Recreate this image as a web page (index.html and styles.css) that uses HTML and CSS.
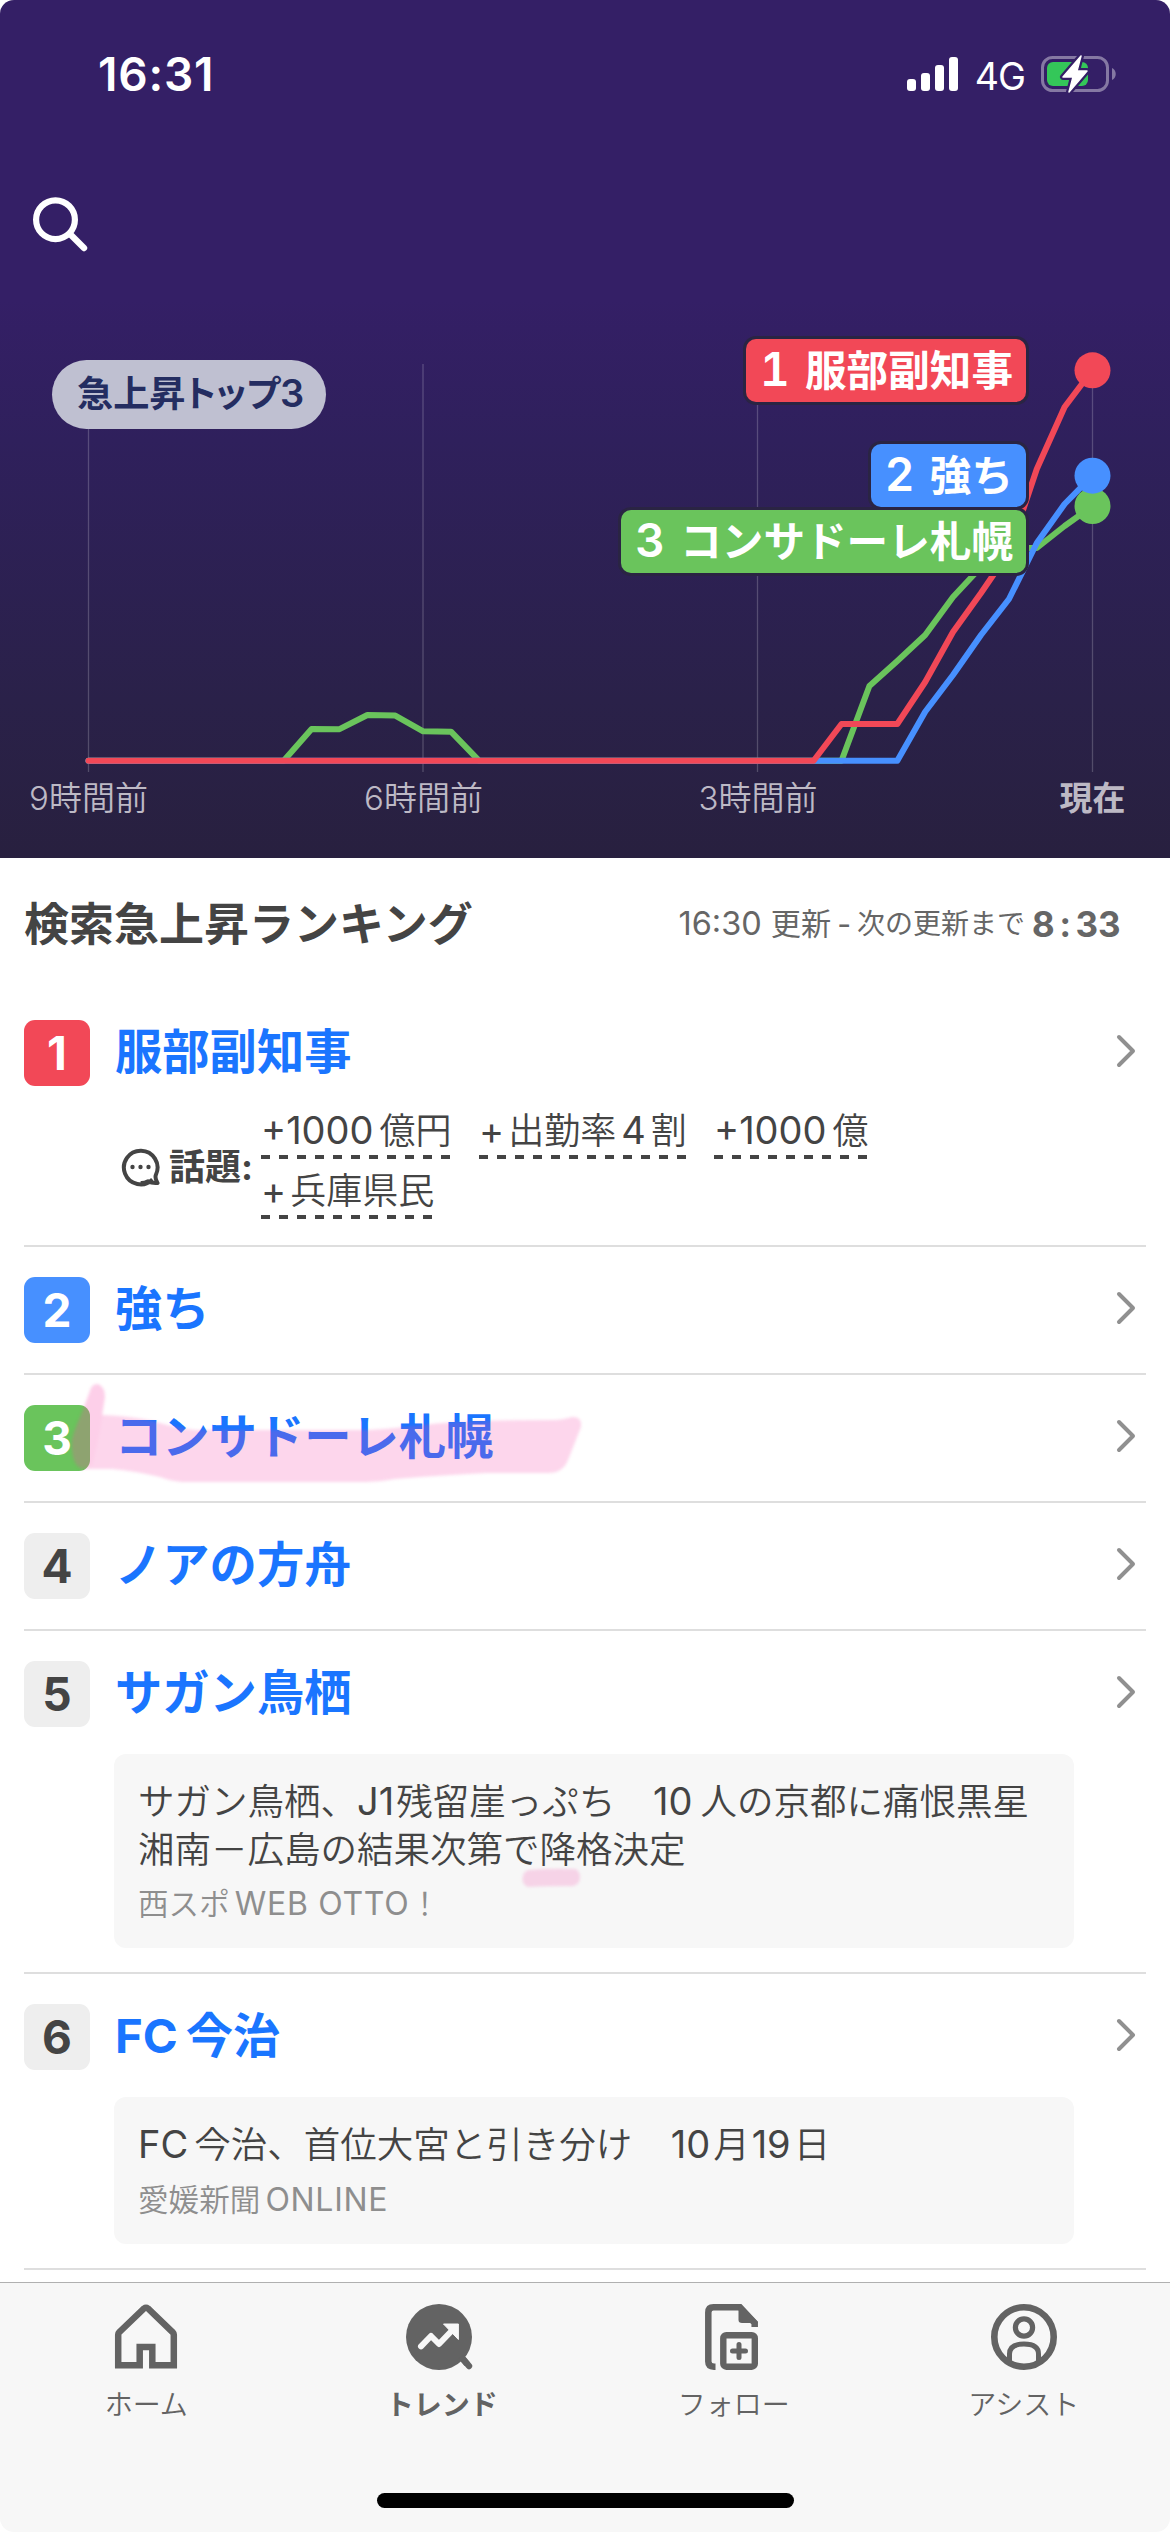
FILE: index.html
```html
<!DOCTYPE html>
<html lang="ja">
<head>
<meta charset="utf-8">
<title>検索急上昇ランキング</title>
<link rel="stylesheet" href="styles.css">
</head>
<body>
<div class="screen">
  <header class="hero">
    <div class="status">
      <span class="clock">16:31</span>
      <div class="status-right">
        <svg class="signal" width="52" height="34" viewBox="0 0 52 34" fill="#fff">
          <rect x="0" y="22" width="9" height="12" rx="3"/><rect x="14" y="16" width="9" height="18" rx="3"/>
          <rect x="28" y="8" width="9" height="26" rx="3"/><rect x="42" y="0" width="9" height="34" rx="3"/>
        </svg>
        <span class="network">4G</span>
        <svg class="battery" width="76" height="40" viewBox="0 0 76 40">
          <rect x="1.5" y="3.5" width="65" height="33" rx="10" fill="none" stroke="#8578a3" stroke-width="3"/>
          <path d="M71 14c5 2 5 10 0 12z" fill="#8578a3"/>
          <rect x="6" y="8" width="41" height="24" rx="6" fill="#34c759"/>
          <path d="M40 2L22 23h10l-4 15 18-21H36z" fill="#fff" stroke="#341f66" stroke-width="6" stroke-linejoin="round"/>
          <path d="M40 2L22 23h10l-4 15 18-21H36z" fill="#fff" stroke="#fff" stroke-width="1.5" stroke-linejoin="round"/>
        </svg>
      </div>
    </div>
    <div class="toolbar">
      <svg width="56" height="56" viewBox="0 0 56 56" fill="none" stroke="#fff" stroke-linecap="round">
        <circle cx="23.5" cy="23.7" r="19.4" stroke-width="6.2"/><path d="M38.5 38.5L52 52" stroke-width="6.4"/>
      </svg>
    </div>
    <div class="chart">
      <svg class="plot" width="1170" height="558" viewBox="0 300 1170 558">
        <g fill="none" stroke="#fff" stroke-opacity=".2" stroke-width="1.3">
          <path d="M88.5 364V772M423 364V772M757.5 364V772M1092.5 364V772"/>
        </g>
        <g fill="none" stroke-width="6" stroke-linejoin="round" stroke-linecap="round">
          <path stroke="#6ac45c" d="M88.5 760.7H283.7L311.6 729L339.5 729.2L367.4 715L395.3 715.6L423.2 731.3L451 731.7L479 760.7H841.5L869.4 686L897.3 661L925.2 635L953 597L981 567L1009 548H1036.8L1064.6 526L1092.5 506"/>
          <path stroke="#4790ff" d="M88.5 760.7H897.3L925.2 711.7L953 675L981 635L1009 599L1036.8 543L1064.6 504L1092.5 475.7"/>
          <path stroke="#f24857" d="M88.5 760.7H813.6L841.5 724H897.3L925.2 682L953 632L981 593L1009 552L1036.8 469L1064.6 407L1092.5 370"/>
        </g>
        <circle cx="1092.5" cy="506" r="18" fill="#6ac45c"/>
        <circle cx="1092.5" cy="475.7" r="18" fill="#4790ff"/>
        <circle cx="1092.5" cy="370.3" r="18" fill="#f24857"/>
        <g class="axis" text-anchor="middle">
          <text x="88.5" y="810">9時間前</text><text x="423.5" y="810">6時間前</text><text x="758" y="810">3時間前</text>
          <text class="now" x="1092.5" y="810">現在</text>
        </g>
      </svg>
      <div class="chip">急上昇トップ<span class="chip-num">3</span></div>
      <div class="tag tag1"><span class="tag-num">1</span>服部副知事</div>
      <div class="tag tag2"><span class="tag-num">2</span>強ち</div>
      <div class="tag tag3"><span class="tag-num">3</span>コンサドーレ札幌</div>
    </div>
  </header>

  <main class="list">
    <div class="heading">
      <h1>検索急上昇ランキング</h1>
      <p class="update"><span class="time">16:30</span><span class="upd">更新</span><span class="dash">-</span><span class="next">次の更新まで</span><span class="count">8<i>:</i>33</span></p>
    </div>

    <section class="item">
      <div class="row"><span class="badge red">1</span><h2>服部副知事</h2><svg class="chev" width="20" height="34" viewBox="0 0 20 34"><path d="M3 3L17 17L3 31"/></svg></div>
      <div class="topics">
        <svg class="bubble" width="40" height="40" viewBox="0 0 40 40">
          <path d="M31.5 32.5A16.8 16.8 0 1 1 35 27.5Q33.5 31 36.5 36Q31 36.5 27 34.2Q23 36.3 19.5 36" fill="none" stroke="#444" stroke-width="4" stroke-linejoin="round"/>
          <g fill="#444"><circle cx="11.5" cy="20" r="2.2"/><circle cx="19.5" cy="20" r="2.2"/><circle cx="27.5" cy="20" r="2.2"/></g>
        </svg>
        <b class="label">話題:</b>
        <div class="links">
          <a class="w1"><span class="num">+1000</span>億円</a><a class="w2"><span class="num plus">+</span>出勤率<span class="num mid">4</span>割</a><a class="w3"><span class="num">+1000</span>億</a><a class="w4"><span class="num plus">+</span>兵庫県民</a>
        </div>
      </div>
    </section>

    <section class="item">
      <div class="row"><span class="badge blue">2</span><h2>強ち</h2><svg class="chev" width="20" height="34" viewBox="0 0 20 34"><path d="M3 3L17 17L3 31"/></svg></div>
    </section>

    <section class="item">
      <div class="row"><span class="badge green">3</span><h2>コンサドーレ札幌</h2><svg class="chev" width="20" height="34" viewBox="0 0 20 34"><path d="M3 3L17 17L3 31"/></svg></div>
      <svg class="marker" width="540" height="128" viewBox="60 1375 540 128">
        <g fill="#f645a8">
          <path fill-opacity=".22" d="M91 1388Q93 1384 98 1384Q105 1387 105 1397L102 1415Q130 1416 153 1421Q175 1428 195 1430H367Q390 1429 432 1424Q470 1420 555 1420Q562 1420 572 1417Q582 1416 581 1427L568 1460Q563 1473 548 1473H486Q430 1476 395 1479Q380 1482 366 1482H182Q170 1481 160 1477Q135 1471 112 1469H82Q71 1466 72 1440Q74 1430 81 1415Z"/>
          <path fill-opacity=".05" d="M91 1388Q93 1384 98 1384Q105 1387 105 1397Q103 1420 92 1466H82Q71 1466 72 1440Q74 1430 81 1415Z"/>
        </g>
      </svg>
    </section>

    <section class="item">
      <div class="row"><span class="badge">4</span><h2>ノアの方舟</h2><svg class="chev" width="20" height="34" viewBox="0 0 20 34"><path d="M3 3L17 17L3 31"/></svg></div>
    </section>

    <section class="item with-card">
      <div class="row"><span class="badge">5</span><h2>サガン鳥栖</h2><svg class="chev" width="20" height="34" viewBox="0 0 20 34"><path d="M3 3L17 17L3 31"/></svg></div>
      <div class="card">
        <p class="news">サガン鳥栖、<span class="num j1">J1</span>残留崖っぷち　<span class="num ten">10</span>人の京都に痛恨黒星<br>湘南－広島の結果次第で降格決定</p>
        <p class="source">西スポ<span class="src">WEB OTTO</span>！</p>
        <svg class="marker-small" width="70" height="30" viewBox="0 0 70 30"><path d="M13 6Q35 4 60 5Q66 10 63 18Q60 23 52 22Q30 22 12 23Q5 20 7 12Q8 7 13 6Z" fill="#f645a8" fill-opacity=".2"/></svg>
      </div>
    </section>

    <section class="item with-card">
      <div class="row"><span class="badge">6</span><h2><span class="fc">FC</span>今治</h2><svg class="chev" width="20" height="34" viewBox="0 0 20 34"><path d="M3 3L17 17L3 31"/></svg></div>
      <div class="card">
        <p class="news"><span class="num fcn">FC</span>今治、首位大宮と引き分け　<span class="num d">10</span>月<span class="num d">19</span>日</p>
        <p class="source">愛媛新聞<span class="src">ONLINE</span></p>
      </div>
    </section>
  </main>

  <nav class="tabs">
    <a class="tab">
      <svg width="68" height="68" viewBox="0 0 68 68" fill="none" stroke="#636363" stroke-width="6.5" stroke-linejoin="round"><path d="M28 62.2H6.2V31.5Q6.2 30.3 7.2 29.3L32 5.5Q34 4 36 5.500L60.800 29.300Q61.800 30.300 61.800 31.500V62.200H40.600V44H27.600V65.200" stroke="none"/><path d="M27.700 65.400V44H40.300V65.400M24.500 62.200H6.200V31.500Q6.200 30.300 7.200 29.300L32 5.500Q34 4 36 5.500L60.800 29.300Q61.800 30.300 61.800 31.500V62.200H43.500" stroke-linejoin="miter"/></svg>
      <span>ホーム</span>
    </a>
    <a class="tab on">
      <svg width="68" height="68" viewBox="0 0 68 68"><circle cx="34" cy="34" r="33" fill="#636363"/><path d="M59 57L64 63" stroke="#636363" stroke-width="6.400" stroke-linecap="round"/><path d="M56 54L62 61" stroke="#636363" stroke-width="6.400"/><path d="M16 43.400L26 33L34 41L47 27.500" fill="none" stroke="#f7f7f7" stroke-width="6" stroke-linecap="round" stroke-linejoin="round"/><path d="M38.500 21H53.400V36.500Z" fill="#f7f7f7" stroke="#f7f7f7" stroke-linejoin="round"/></svg>
      <span>トレンド</span>
    </a>
    <a class="tab follow">
      <svg width="68" height="68" viewBox="0 0 68 68"><path d="M18.500 63.700H17Q11.300 63.500 11.300 58.500V9.500Q11.300 4.300 16.500 4.300H43L57.700 20V24" fill="none" stroke="#636363" stroke-width="6.500"/><path d="M43 1.500L60.500 18.500V20H45Q41.500 20 41.500 17V4Z" fill="#636363"/><rect x="26.300" y="32.200" width="31.500" height="31.500" rx="3" fill="none" stroke="#636363" stroke-width="6.400"/><path d="M42 41.500V54.500M35.500 48H48.500" stroke="#636363" stroke-width="5" stroke-linecap="round"/></svg>
      <span>フォロー</span>
    </a>
    <a class="tab">
      <svg width="68" height="68" viewBox="0 0 68 68" fill="none" stroke="#636363"><circle cx="34" cy="34" r="29.700" stroke-width="6.600"/><circle cx="34" cy="24.500" r="8.600" stroke-width="5.200"/><path d="M19.500 59V51Q19.500 41 34 41Q48.500 41 48.500 51V59" stroke-width="5"/></svg>
      <span>アシスト</span>
    </a>
    <div class="home-bar"></div>
  </nav>
</div>
</body>
</html>
```
FILE: styles.css
```css
* { box-sizing: border-box; margin: 0; padding: 0; }
html { background: #fff; }
body {
  width: 1170px;
  font-family: Inter, "Noto Sans CJK JP", sans-serif;
  color: #444;
}
svg { display: block; flex: none; }
.screen {
  width: 1170px;
  height: 2532px;
  display: flex;
  flex-direction: column;
  overflow: hidden;
  border-radius: 14px;
  background: #fff;
}

/* header */
.hero {
  height: 858px;
  flex: none;
  background: linear-gradient(#341f66 0, #341f66 300px, #2f205c 440px, #2a2149 700px, #28203f 858px);
}
.status {
  height: 148px;
  padding: 0 53px 0 98px;
  display: flex;
  align-items: center;
  justify-content: space-between;
  color: #fff;
}
.clock { font-size: 46px; font-weight: 600; letter-spacing: .8px; }
.status-right { display: flex; align-items: center; }
.network { margin: 4px 16px 0 16px; font-size: 37.5px; font-weight: 400; letter-spacing: -1px; }
.toolbar { height: 152px; padding: 48px 0 0 32px; }
.chart { position: relative; height: 558px; }
.axis { font-size: 33px; font-weight: 350; fill: #bdb9c5; }
.axis .now { font-weight: 700; }
.chip {
  position: absolute;
  left: 52px;
  top: 60px;
  width: 274px;
  height: 69px;
  border-radius: 35px;
  background: #bfc0d1;
  color: #242d61;
  font-size: 36.2px;
  font-weight: 700;
  line-height: 69px;
  padding-left: 25px;
  white-space: nowrap;
  font-feature-settings: "palt";
}
.chip-num { font-weight: 600; font-size: 38px; line-height: 1; }
.tag {
  position: absolute;
  right: 144px;
  height: 63px;
  padding: 0 13px 0 14px;
  border-radius: 10px;
  box-shadow: 0 0 0 3px #2a2443;
  color: #fff;
  font-size: 41.6px;
  font-weight: 700;
  line-height: 65px;
  white-space: nowrap;
}
.tag-num { display: inline-block; width: 45px; font-size: 46px; font-weight: 600; line-height: 1; font-feature-settings: "tnum"; }
.tag1 { top: 39px; background: #f24857; }
.tag2 { top: 144px; background: #4790ff; }
.tag3 { top: 210px; background: #6ac45c; }

/* ranking */
.list { flex: 1; padding: 0 24px; min-height: 0; }
.heading { height: 132px; display: flex; justify-content: space-between; }
h1 { font-size: 45px; font-weight: 700; line-height: 133px; }
.update { display: flex; line-height: 132px; font-size: 30.2px; color: #666; padding-right: 25px; white-space: nowrap; }
.time { font-size: 32.5px; }
.upd { margin-left: 9px; }
.dash { margin: 0 6px; }
.next { font-size: 28px; }
.count { margin-left: 7px; font-size: 35px; font-weight: 700; font-feature-settings: "tnum"; }
.count i { display: inline-block; width: 21px; text-align: center; font-style: normal; }
.item { position: relative; border-bottom: 2px solid #dedede; padding: 30px 0; }
.heading + .item { padding-bottom: 26px; }
.with-card { padding-bottom: 24px; }
.row { display: flex; align-items: center; height: 66px; padding-right: 10px; }
.badge {
  width: 66px;
  height: 66px;
  border-radius: 11px;
  background: #eee;
  font-size: 46px;
  font-weight: 700;
  line-height: 67px;
  text-align: center;
}
.badge.red { background: #f24857; color: #fff; }
.badge.blue { background: #4790ff; color: #fff; }
.badge.green { background: #6ac45c; color: #fff; }
h2 { flex: 1; margin-left: 25px; font-size: 47.300px; font-weight: 700; line-height: 64px; height: 66px; color: #1a75ff; }
.fc { margin-right: 8px; }
.chev { fill: none; stroke: #909090; stroke-width: 4; stroke-linecap: round; stroke-linejoin: round; margin-bottom: 4px; }

.topics { display: flex; padding: 13px 0 0 97px; }
.bubble { margin-top: 48px; }
.label { margin: 38px 0 0 8px; width: 92px; font-size: 36px; line-height: 61px; white-space: nowrap; }
.links { display: flex; flex-wrap: wrap; width: 800px; column-gap: 28px; }
.links a {
  height: 60px;
  font-size: 36px;
  line-height: 65px;
  font-weight: 350;
  white-space: nowrap;
  background: repeating-linear-gradient(90deg, #444 0 9px, transparent 9px 18px) 0 100% / 100% 4px no-repeat;
}
.w1 { width: 190px; }
.w2 { width: 207px; }
.w3 { width: 155px; }
.w4 { width: 172px; }
.num { font-size: 38px; font-weight: 400; line-height: 1; margin-right: 6px; }
.num.plus { margin-right: 4px; }
.num.mid { margin: 0 5px; }

.card {
  position: relative;
  width: 960px;
  margin: 27px 0 0 90px;
  padding: 24px;
  border-radius: 12px;
  background: #f7f7f7;
}
.news { font-size: 36.500px; line-height: 48px; white-space: nowrap; font-weight: 350; margin-bottom: -1px; }
.card .news { height: auto; }
.news .j1 { margin-right: 2px; }
.news .ten { margin-left: 1px; margin-right: 8px; }
.news .d { margin-left: 2px; margin-right: 3px; }
.source { margin-top: 10px; font-size: 30.600px; line-height: 42px; color: #8e8e8e; font-weight: 350; }
.source:nth-of-type(2) { margin-bottom: -1px; }
.src { font-size: 32px; margin-left: 5px; line-height: 1; letter-spacing: .7px; font-weight: 400; }
.marker { position: absolute; left: 36px; top: 0; filter: blur(1.5px); }
.marker-small { position: absolute; left: 402px; top: 110px; filter: blur(1.5px); }
.item:nth-of-type(6) .news { line-height: 49px; }
.item:nth-of-type(6) .card { height: 147px; }
.item:nth-of-type(5) .card { height: 194px; }

/* tab bar */
.tabs {
  position: relative;
  flex: none;
  height: 250px;
  display: flex;
  border-top: 1px solid #b0b0b0;
  background: #f7f7f7;
  color: #636363;
}
.tab { flex: 1; display: flex; flex-direction: column; align-items: center; padding-top: 20px; font-size: 28px; font-weight: 350; }
.tab span { margin-top: 14px; line-height: 40px; }
.tab.on { font-weight: 700; }
.tab.on span { padding-left: 6px; }
.tab.follow span { padding-left: 5px; }
.home-bar { position: absolute; left: 377px; top: 210px; width: 417px; height: 15px; border-radius: 8px; background: #000; }
```
